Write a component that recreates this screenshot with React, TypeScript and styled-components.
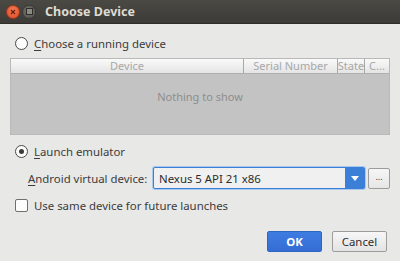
import styled, { createGlobalStyle } from 'styled-components'

const GlobalStyle = createGlobalStyle`
    html, body {
        margin: 0;
        padding: 0;
        background: #e8e8e7;
    }
    body {
        font-family: "Noto Sans", "DejaVu Sans", sans-serif;
        font-size: 11.4px;
        color: #3c3c3c;
    }
`

const Window = styled.div`
    width: 400px;
    height: 261px;
    display: flex;
    flex-direction: column;
    background: #e8e8e7;
    overflow: hidden;
`

const TitleBar = styled.div`
    height: 23px;
    flex: none;
    display: flex;
    align-items: center;
    padding-left: 6px;
    gap: 2px;
    background: linear-gradient(#4a4944, #3c3b37);
    border-bottom: 1px solid #2e2d2a;
`

const WinButton = styled.div<{ $close?: boolean }>`
    width: 14px;
    height: 14px;
    border-radius: 50%;
    display: flex;
    align-items: center;
    justify-content: center;
    background: ${p => p.$close
        ? 'radial-gradient(circle at 50% 35%, #f27b56, #dc4a22)'
        : 'radial-gradient(circle at 50% 35%, #73726d, #56554f)'};
    border: 1px solid ${p => p.$close ? '#a7371a' : '#3a3935'};
    box-sizing: border-box;
`

const MinSquare = styled.div`
    width: 5px;
    height: 5px;
    border: 1px solid #2f2e2a;
    background: #8b8a84;
`

const Title = styled.div`
    margin-left: 7px;
    color: #dfdbd2;
    font-weight: bold;
    font-size: 12.5px;
    font-family: "Noto Sans", sans-serif;
`

const Content = styled.div`
    flex: 1;
    display: flex;
    flex-direction: column;
    padding: 9px 10px 0 10px;
`

const OptionRow = styled.label<{ $top?: number; $indent?: number }>`
    height: 20px;
    display: flex;
    align-items: center;
    margin-top: ${p => p.$top ?? 0}px;
    padding-left: ${p => p.$indent ?? 5}px;
    gap: 6px;
    color: #3c3c3c;
    white-space: nowrap;
`

const Radio = styled.span<{ $checked?: boolean }>`
    width: 13px;
    height: 13px;
    box-sizing: border-box;
    border-radius: 50%;
    border: 1px solid #4a4a4a;
    background: #fdfdfd;
    display: flex;
    align-items: center;
    justify-content: center;
    &::after {
        content: '';
        display: ${p => p.$checked ? 'block' : 'none'};
        width: 5px;
        height: 5px;
        border-radius: 50%;
        background: #3c3c3c;
    }
`

const Checkbox = styled.span`
    width: 13px;
    height: 13px;
    box-sizing: border-box;
    border-radius: 2px;
    border: 1px solid #707070;
    background: #fdfdfd;
`

const Mnemonic = styled.span`
    text-decoration: underline;
    text-underline-offset: 2px;
`

const Table = styled.div`
    margin-top: 5px;
    height: 77px;
    box-sizing: border-box;
    border: 1px solid #b9b9b9;
    display: flex;
    flex-direction: column;
`

const HeaderRow = styled.div`
    height: 14px;
    flex: none;
    display: grid;
    grid-template-columns: 232px 94px 27px 1fr;
    background: linear-gradient(#fafafa, #e4e4e4);
    border-bottom: 1px solid #b0b0b0;
    font-size: 11px;
    color: #a8a8a8;
`

const HeaderCell = styled.div<{ $first?: boolean }>`
    display: flex;
    align-items: center;
    justify-content: center;
    border-left: ${p => p.$first ? 'none' : '1px solid #a8a8a8'};
    white-space: nowrap;
    overflow: hidden;
    line-height: 12px;
`

const TableBody = styled.div`
    flex: 1;
    background: #c3c3c3;
    display: flex;
    justify-content: center;
    padding-top: 15px;
    color: #8e8e8e;
    font-size: 11px;
`

const DeviceRow = styled.div`
    margin-top: 6px;
    height: 22px;
    display: flex;
    align-items: center;
    padding-left: 18px;
    white-space: nowrap;
`

const FieldLabel = styled.span`
    width: 125px;
    flex: none;
`

const Combo = styled.div`
    flex: 1;
    height: 22px;
    box-sizing: border-box;
    border: 1px solid #3b7fd6;
    box-shadow: 0 0 0 1px #a7c8ef;
    border-radius: 2px;
    background: #f0f0f0;
    display: flex;
    align-items: stretch;
`

const ComboText = styled.span`
    flex: 1;
    display: flex;
    align-items: center;
    padding-left: 5px;
    color: #2b2b2b;
`

const ComboArrow = styled.span`
    width: 19px;
    background: #3b7fd6;
    display: flex;
    align-items: center;
    justify-content: center;
`

const BrowseButton = styled.button`
    margin-left: 3px;
    width: 22px;
    height: 21px;
    box-sizing: border-box;
    border: 1px solid #9c9c9c;
    border-radius: 2px;
    background: linear-gradient(#f6f6f6, #e6e6e6);
    font-size: 9px;
    color: #3c3c3c;
    padding: 0 0 4px 0;
    font-family: inherit;
`

const ButtonBar = styled.div`
    margin-top: 16px;
    display: flex;
    justify-content: flex-end;
    gap: 10px;
    padding-right: 3px;
`

const DialogButton = styled.button<{ $primary?: boolean }>`
    width: 55px;
    height: 21px;
    box-sizing: border-box;
    border-radius: 2px;
    font-family: inherit;
    font-size: 11.4px;
    padding: 0;
    border: 1px solid ${p => p.$primary ? '#2f65c5' : '#9d9d9d'};
    background: ${p => p.$primary
        ? 'linear-gradient(#3f7ce2, #346ed3)'
        : 'linear-gradient(#f7f7f7, #e3e3e3)'};
    color: ${p => p.$primary ? '#ffffff' : '#2e2e2e'};
    font-weight: ${p => p.$primary ? 'bold' : 'normal'};
`

const App = () => {
    return (
        <Window>
            <GlobalStyle />
            <TitleBar>
                <WinButton $close>
                    <svg width="6" height="6" viewBox="0 0 6 6">
                        <path d="M1 1 L5 5 M5 1 L1 5" stroke="#6b1c08" strokeWidth="1.2" />
                    </svg>
                </WinButton>
                <WinButton>
                    <MinSquare />
                </WinButton>
                <Title>Choose Device</Title>
            </TitleBar>
            <Content>
                <OptionRow>
                    <Radio />
                    <span><Mnemonic>C</Mnemonic>hoose a running device</span>
                </OptionRow>
                <Table>
                    <HeaderRow>
                        <HeaderCell $first>Device</HeaderCell>
                        <HeaderCell>Serial Number</HeaderCell>
                        <HeaderCell>State</HeaderCell>
                        <HeaderCell>C...</HeaderCell>
                    </HeaderRow>
                    <TableBody>Nothing to show</TableBody>
                </Table>
                <OptionRow $top={6}>
                    <Radio $checked />
                    <span><Mnemonic>L</Mnemonic>aunch emulator</span>
                </OptionRow>
                <DeviceRow>
                    <FieldLabel><Mnemonic>A</Mnemonic>ndroid virtual device:</FieldLabel>
                    <Combo>
                        <ComboText>Nexus 5 API 21 x86</ComboText>
                        <ComboArrow>
                            <svg width="8" height="5" viewBox="0 0 8 5">
                                <path d="M0 0 L8 0 L4 5 Z" fill="#ffffff" />
                            </svg>
                        </ComboArrow>
                    </Combo>
                    <BrowseButton>...</BrowseButton>
                </DeviceRow>
                <OptionRow $top={6}>
                    <Checkbox />
                    <span>Use same device for future launches</span>
                </OptionRow>
                <ButtonBar>
                    <DialogButton $primary>OK</DialogButton>
                    <DialogButton>Cancel</DialogButton>
                </ButtonBar>
            </Content>
        </Window>
    )
}

export default App
